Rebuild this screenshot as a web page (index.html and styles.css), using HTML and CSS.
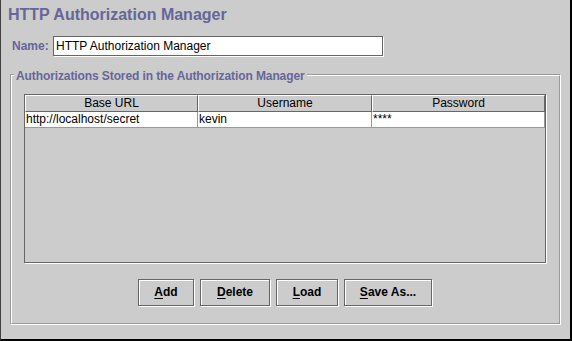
FILE: index.html
```html
<!DOCTYPE html>
<html>
<head>
<meta charset="utf-8">
<link rel="stylesheet" href="styles.css">
</head>
<body>
<div class="frame">
  <h1 class="title">HTTP Authorization Manager</h1>
  <div class="name-row">
    <label class="name-label" for="name">Name:</label>
    <input id="name" class="field" type="text" value="HTTP Authorization Manager">
  </div>
  <div class="group">
    <div class="group-inner">
      <div class="scroll">
        <div class="thead">
          <div class="th">Base URL</div>
          <div class="th">Username</div>
          <div class="th">Password</div>
        </div>
        <div class="tr">
          <div class="td">http://localhost/secret</div>
          <div class="td">kevin</div>
          <div class="td">****</div>
        </div>
      </div>
      <div class="buttons">
        <button class="btn btn-add"><u>A</u>dd</button>
        <button class="btn btn-delete"><u>D</u>elete</button>
        <button class="btn btn-load"><u>L</u>oad</button>
        <button class="btn btn-save"><u>S</u>ave As...</button>
      </div>
    </div>
    <span class="legend">Authorizations Stored in the Authorization Manager</span>
  </div>
</div>
</body>
</html>
```
FILE: styles.css
```css
html, body {
  margin: 0;
  padding: 0;
  background: #cccccc;
}
.frame {
  box-sizing: border-box;
  width: 572px;
  height: 341px;
  background: #cccccc;
  border-left: 1px solid #404040;
  border-right: 2px solid #000;
  border-bottom: 2px solid #000;
  padding-top: 5px;
  font-family: "Liberation Sans", Arial, sans-serif;
  color: #000;
}
.title {
  margin: 0;
  padding-left: 7px;
  font-size: 16px;
  line-height: 20px;
  font-weight: bold;
  color: #666699;
}
.name-row {
  display: flex;
  align-items: flex-start;
  height: 21px;
  margin-top: 11px;
  padding-left: 11px;
}
.name-label {
  width: 41px;
  font-size: 12px;
  font-weight: bold;
  line-height: 20px;
  color: #666699;
}
.field {
  box-sizing: border-box;
  width: 330px;
  height: 20px;
  margin: 0;
  border: 1px solid #666666;
  box-shadow: 1px 1px 0 #fff;
  padding: 0 2px;
  font: 12px "Liberation Sans", Arial, sans-serif;
  color: #000;
  background: #fff;
  outline: none;
}
.group {
  position: relative;
  box-sizing: border-box;
  width: 551px;
  height: 251px;
  margin: 17px 0 0 9px;
  border: 1px solid;
  border-color: #999999 #fff #fff #999999;
}
.group-inner {
  box-sizing: border-box;
  height: 100%;
  border: 1px solid;
  border-color: #fff #999999 #999999 #fff;
  padding: 18px 13px 16px 12px;
}
.legend {
  position: absolute;
  top: -6px;
  left: 3px;
  padding: 0 2px;
  background: #cccccc;
  color: #666699;
  font-size: 12px;
  font-weight: bold;
  line-height: 14px;
  letter-spacing: -0.1px;
  white-space: nowrap;
}
.scroll {
  box-sizing: border-box;
  height: 169px;
  border: 1px solid #666666;
  box-shadow: 1px 1px 0 #fff;
  background: #cccccc;
}
.thead, .tr {
  display: grid;
  grid-template-columns: 173px 174px 173px;
}
.th {
  box-sizing: border-box;
  height: 17px;
  border: 1px solid;
  border-color: #fff #666666 #666666 #fff;
  text-align: center;
  font-size: 12px;
  line-height: 15px;
}
.td {
  box-sizing: border-box;
  height: 16px;
  background: #fff;
  border-right: 1px solid #999999;
  border-bottom: 1px solid #999999;
  padding-left: 1px;
  font-size: 12px;
  line-height: 15px;
  white-space: nowrap;
  overflow: hidden;
}
.buttons {
  display: flex;
  justify-content: center;
  gap: 6px;
  margin-top: 16px;
}
.btn {
  box-sizing: border-box;
  height: 27px;
  margin: 0;
  padding: 0;
  border: 1px solid #666666;
  box-shadow: 1px 1px 0 #fff, inset 1px 1px 0 #fff;
  background: #cccccc;
  font: bold 12px "Liberation Sans", Arial, sans-serif;
  line-height: 25px;
  color: #000;
}
.btn u {
  text-underline-offset: 2px;
}
.btn-add { width: 56px; }
.btn-delete { width: 70px; }
.btn-load { width: 62px; }
.btn-save { width: 88px; }
```
